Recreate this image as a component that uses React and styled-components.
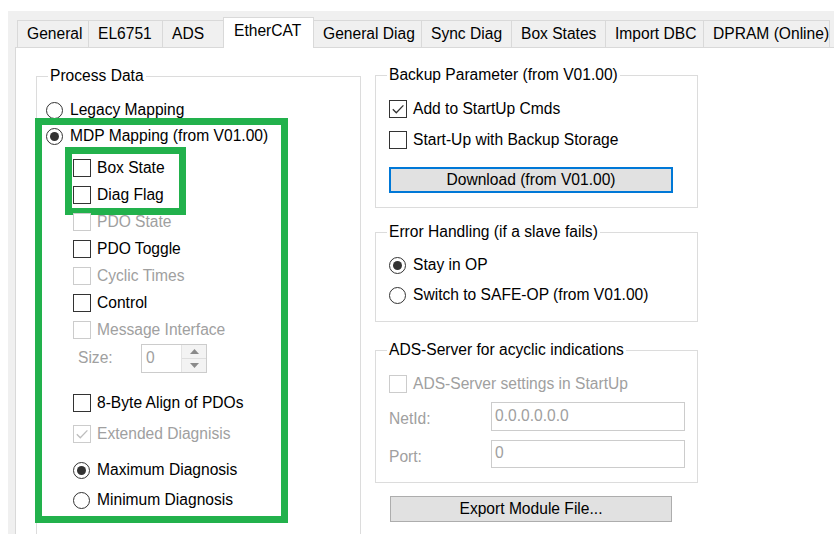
import React from 'react'
import styled, { createGlobalStyle } from 'styled-components'

const GlobalStyle = createGlobalStyle`
  html, body, #root {
    margin: 0;
    height: 100%;
  }
  body {
    overflow: hidden;
    background: #fff;
    font-family: "Liberation Sans", Arial, sans-serif;
    font-size: 15.6px;
    color: #000;
  }
`

const Window = styled.div`
  box-sizing: border-box;
  height: calc(100% - 11px);
  margin: 11px 0 0 8px;
  padding-left: 7px;
  background: #f0f0f0;
  display: flex;
  flex-direction: column;
`

const TabStrip = styled.div`
  height: 36px;
  flex: none;
  display: flex;
  align-items: flex-end;
  padding-left: 2px;
  position: relative;
  z-index: 1;
`

const Tab = styled.div`
  box-sizing: border-box;
  width: ${p => p.$w + 1}px;
  height: ${p => (p.$active ? 31 : 27)}px;
  margin-right: -1px;
  margin-bottom: ${p => (p.$active ? -1 : 0)}px;
  padding: 0 0 ${p => (p.$active ? 4 : 0)}px ${p => (p.$active ? 10 : 9)}px;
  border: 1px solid #d9d9d9;
  border-bottom: none;
  background: ${p => (p.$active ? '#fff' : '#f0f0f0')};
  position: relative;
  z-index: ${p => (p.$active ? 2 : 1)};
  display: flex;
  align-items: center;
  white-space: nowrap;
`

const Page = styled.div`
  flex: 1;
  background: #fff;
  border-top: 1px solid #d9d9d9;
  border-left: 1px solid #d9d9d9;
  padding: 19px 0 0 20px;
  display: flex;
  align-items: flex-start;
  gap: 14px;
  overflow: hidden;
`

const Column = styled.div`
  display: flex;
  flex-direction: column;
  margin-top: ${p => p.$mt || 0}px;
`

const GroupBox = styled.fieldset`
  box-sizing: border-box;
  width: ${p => p.$w}px;
  min-width: 0;
  margin: ${p => p.$mt || 0}px 0 0 0;
  padding: ${p => p.$pt}px 0 ${p => p.$pb}px ${p => p.$pl}px;
  border: 1px solid #dcdcdc;
  display: flex;
  flex-direction: column;
  align-items: flex-start;
`

const Caption = styled.legend`
  padding: 0 2px;
  margin-left: ${p => p.$ml}px;
  line-height: 18px;
  color: #000;
  white-space: nowrap;
`

const OptionRow = styled.label`
  display: flex;
  align-items: center;
  gap: ${p => (p.$radio ? 7 : 6)}px;
  height: ${p => p.$h || 27}px;
  margin: ${p => p.$mt || 0}px 0 0 ${p => p.$ml || 0}px;
  color: ${p => (p.$disabled ? '#a0a0a0' : '#000')};
  white-space: nowrap;
`

const Box = styled.span`
  box-sizing: border-box;
  flex: none;
  width: 18px;
  height: 18px;
  border: 1px solid ${p => (p.$disabled ? '#cccccc' : '#333')};
  background: #fff;
  display: flex;
  align-items: center;
  justify-content: center;
`

const Round = styled.span`
  box-sizing: border-box;
  flex: none;
  width: 17px;
  height: 17px;
  border-radius: 50%;
  border: 1px solid #333;
  background: #fff;
  display: flex;
  align-items: center;
  justify-content: center;

  &::after {
    content: '';
    display: ${p => (p.$checked ? 'block' : 'none')};
    width: 9px;
    height: 9px;
    border-radius: 50%;
    background: #333;
  }
`

// green annotation frames drawn around option blocks
const Highlight = styled.div`
  box-sizing: border-box;
  width: ${p => p.$w}px;
  margin: ${p => p.$mt || 0}px 0 0 ${p => p.$ml || 0}px;
  padding: 0 0 ${p => p.$pb || 0}px ${p => p.$pl || 0}px;
  outline: 7px solid #22b14c;
  display: flex;
  flex-direction: column;
  align-items: flex-start;
`

const SizeRow = styled.div`
  display: flex;
  align-items: center;
  height: 30px;
  margin-left: 36px;
  color: #a0a0a0;
`

const SizeLabel = styled.span`
  width: 63px;
`

const Spin = styled.div`
  box-sizing: border-box;
  display: flex;
  width: 66px;
  height: 29px;
  border: 1px solid #cccccc;
  background: #fff;
`

const SpinValue = styled.span`
  flex: 1;
  padding-left: 4px;
  display: flex;
  align-items: center;
  color: #a0a0a0;
`

const SpinButtons = styled.div`
  width: 24px;
  display: flex;
  flex-direction: column;
  border-left: 1px solid #e3e3e3;
  background: #f3f3f3;
`

const SpinArrow = styled.div`
  flex: 1;
  display: flex;
  align-items: center;
  justify-content: center;

  & + & {
    border-top: 1px solid #dedede;
  }
`

const FieldRow = styled.div`
  display: grid;
  grid-template-columns: 102px 194px;
  align-items: center;
  height: ${p => p.$h}px;
  margin-top: ${p => p.$mt}px;
`

const FieldLabel = styled.span`
  padding-top: 5px;
  color: #a0a0a0;
`

const TextField = styled.div`
  box-sizing: border-box;
  height: 100%;
  border: 1px solid #cccccc;
  background: #fff;
  padding: 0 0 2px 3px;
  display: flex;
  align-items: center;
  color: #a0a0a0;
`

const PushButton = styled.button`
  box-sizing: border-box;
  width: ${p => p.$w}px;
  height: 26px;
  margin: ${p => p.$mt || 0}px 0 0 ${p => p.$ml || 0}px;
  padding: 0;
  font: inherit;
  color: #000;
  background: #e1e1e1;
  border: ${p => (p.$focused ? '2px solid #0078d7' : '1px solid #adadad')};
  display: flex;
  align-items: center;
  justify-content: center;
`

function CheckBox({ label, checked, disabled, ...rest }) {
  return (
    <OptionRow $disabled={disabled} {...rest}>
      <Box $disabled={disabled}>
        {checked && (
          <svg width="14" height="14" viewBox="0 0 14 14">
            <path d="M1.8 7.2 L5.3 10.8 L12.4 3.4" fill="none" stroke={disabled ? '#bdbdbd' : '#333'} strokeWidth="1.3" />
          </svg>
        )}
      </Box>
      {label}
    </OptionRow>
  )
}

function RadioButton({ label, checked, ...rest }) {
  return (
    <OptionRow $radio {...rest}>
      <Round $checked={checked} />
      {label}
    </OptionRow>
  )
}

const Arrow = ({ up }) => (
  <svg width="9" height="5" viewBox="0 0 9 5">
    <path d={up ? 'M0 5 L4.5 0 L9 5 Z' : 'M0 0 L4.5 5 L9 0 Z'} fill="#8a8a8a" />
  </svg>
)

const tabs = [
  ['General', 71],
  ['EL6751', 74],
  ['ADS', 61],
  ['EtherCAT', 90],
  ['General Diag', 108],
  ['Sync Diag', 90],
  ['Box States', 94],
  ['Import DBC', 98],
  ['DPRAM (Online)', 126],
]

export default function App() {
  return (
    <>
      <GlobalStyle />
      <Window>
        <TabStrip>
          {tabs.map(([name, w]) => (
            <Tab key={name} $w={w} $active={name === 'EtherCAT'}>{name}</Tab>
          ))}
        </TabStrip>
        <Page>
          <GroupBox $w={325} $pt={12} $pb={40} $pl={9}>
            <Caption $ml={2}>Process Data</Caption>
            <RadioButton label="Legacy Mapping" $h={26} />
            <Highlight $w={239} $mt={2} $ml={-4} $pb={1}>
              <RadioButton label="MDP Mapping (from V01.00)" checked $h={22} $ml={4} />
              <Highlight $w={107} $mt={7} $ml={30} $pl={1}>
                <CheckBox label="Box State" />
                <CheckBox label="Diag Flag" />
              </Highlight>
              <CheckBox label="PDO State" disabled $ml={31} />
              <CheckBox label="PDO Toggle" $ml={31} />
              <CheckBox label="Cyclic Times" disabled $ml={31} />
              <CheckBox label="Control" $ml={31} />
              <CheckBox label="Message Interface" disabled $ml={31} />
              <SizeRow>
                <SizeLabel>Size:</SizeLabel>
                <Spin>
                  <SpinValue>0</SpinValue>
                  <SpinButtons>
                    <SpinArrow><Arrow up /></SpinArrow>
                    <SpinArrow><Arrow /></SpinArrow>
                  </SpinButtons>
                </Spin>
              </SizeRow>
              <CheckBox label="8-Byte Align of PDOs" $ml={31} $mt={16} />
              <CheckBox label="Extended Diagnisis" checked disabled $ml={31} $mt={4} />
              <RadioButton label="Maximum Diagnosis" checked $ml={31} $mt={8} $h={30} />
              <RadioButton label="Minimum Diagnosis" $ml={31} $h={30} />
            </Highlight>
          </GroupBox>

          <Column $mt={-1}>
            <GroupBox $w={323} $pt={11} $pb={14} $pl={13}>
              <Caption $ml={-2}>Backup Parameter (from V01.00)</Caption>
              <CheckBox label="Add to StartUp Cmds" checked />
              <CheckBox label="Start-Up with Backup Storage" $mt={4} />
              <PushButton $w={284} $mt={14} $focused>Download (from V01.00)</PushButton>
            </GroupBox>

            <GroupBox $w={323} $mt={15} $pt={10} $pb={12} $pl={13}>
              <Caption $ml={-2}>Error Handling (if a slave fails)</Caption>
              <RadioButton label="Stay in OP" checked $h={28} />
              <RadioButton label="Switch to SAFE-OP (from V01.00)" $h={28} $mt={2} />
            </GroupBox>

            <GroupBox $w={323} $mt={19} $pt={11} $pb={14} $pl={13}>
              <Caption $ml={-2}>ADS-Server for acyclic indications</Caption>
              <CheckBox label="ADS-Server settings in StartUp" disabled />
              <FieldRow $h={29} $mt={5}>
                <FieldLabel>NetId:</FieldLabel>
                <TextField>0.0.0.0.0.0</TextField>
              </FieldRow>
              <FieldRow $h={28} $mt={9}>
                <FieldLabel>Port:</FieldLabel>
                <TextField>0</TextField>
              </FieldRow>
            </GroupBox>

            <PushButton $w={282} $mt={13} $ml={15}>Export Module File...</PushButton>
          </Column>
        </Page>
      </Window>
    </>
  )
}
